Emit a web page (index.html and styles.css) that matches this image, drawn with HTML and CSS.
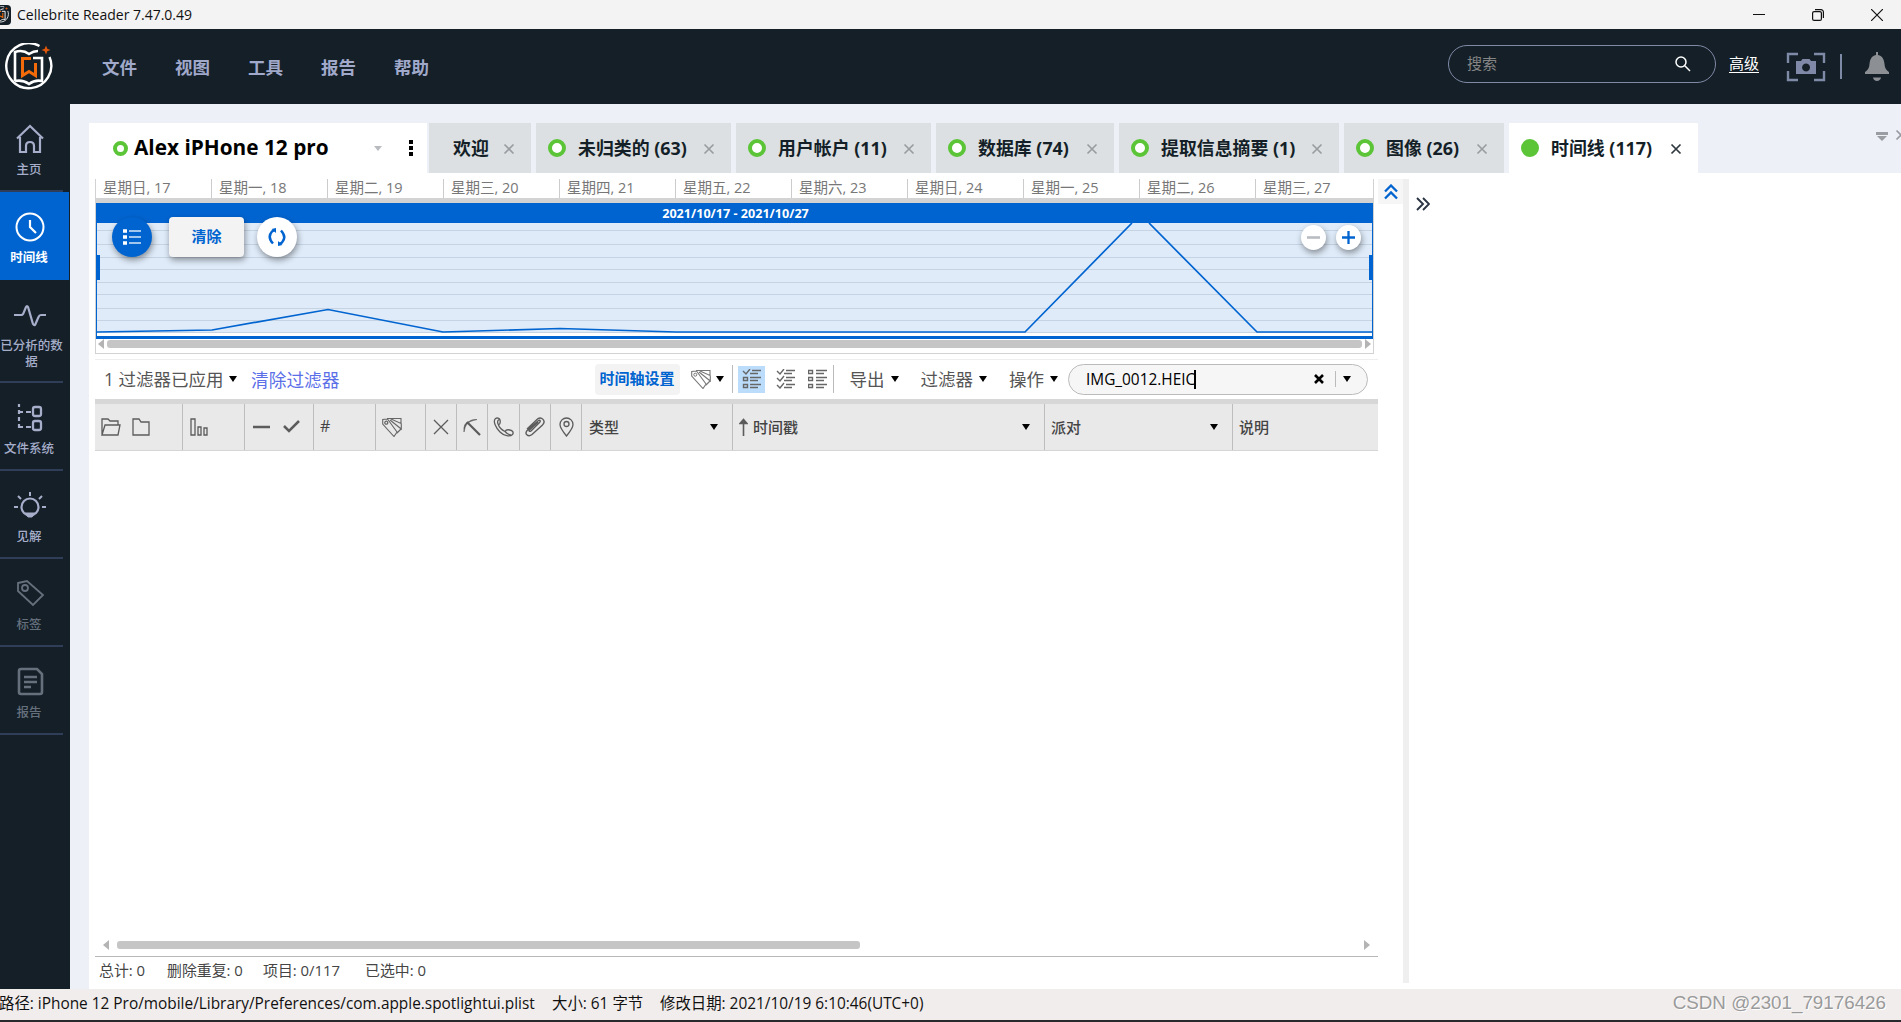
FILE: index.html
```html
<!DOCTYPE html>
<html lang="zh-CN">
<head>
    <meta charset="UTF-8">
    <meta name="viewport" content="width=device-width, initial-scale=1.0">
    <title>Cellebrite Reader 7.47.0.49</title>
    <link rel="stylesheet" href="styles.css">
</head>
<body>
    <svg width="0" height="0" class="defs">
        <symbol id="close" viewBox="0 0 12 12"><path d="M1.5 1.5l9 9M10.500 1.500l-9 9" fill="none" stroke="currentColor" stroke-width="1.7"/></symbol>
        <symbol id="tags" viewBox="0 0 20 20"><path d="M.7 7V2.500L5.500 2l9.500 13-3 4.500zM5 1.500h14v5L9 2M19.300 6.500v5.500L8 3M19 12l-4 4" fill="none" stroke="currentColor" stroke-width="1.100"/><circle cx="4.300" cy="5.700" r="1.500" fill="none" stroke="currentColor"/></symbol>
        <symbol id="logo" viewBox="0 0 48 48">
            <path d="M34.500 3A22.500 22.500 0 1 0 44.500 14" fill="none" stroke="#fff" stroke-width="2.400"/>
            <path d="M10 38V9c6-2 10-1 14 2 3-2 5-3 9-3M10 38c6-1 10 0 14 3 4-3 8-4 13-3V15h-9" fill="none" stroke="#fff" stroke-width="2.600"/>
            <path d="M26 15.500h-8.500v17l6.500-4 6.500 4V20" fill="none" stroke="#f26a0a" stroke-width="3"/>
            <path d="M41 2.500l1.300 3.200 3.200 1.300-3.200 1.300L41 11.500l-1.300-3.200L36.500 7l3.200-1.300z" fill="#e0560a"/>
        </symbol>
    </svg>

    <div class="titlebar">
        <svg class="app-icon" viewBox="0 0 20 20"><rect width="20" height="20" rx="4" fill="#141f28"/><use href="#logo" x="1" y="1" width="17" height="17"/></svg>
        <span class="app-name">Cellebrite Reader 7.47.0.49</span>
        <div class="window-buttons">
            <svg width="12" height="12" viewBox="0 0 12 12"><path d="M0 5.500h12" stroke="#111"/></svg>
            <svg width="12" height="12" viewBox="0 0 12 12" fill="none" stroke="#111" stroke-width="1.200"><rect x=".6" y="2.600" width="8.800" height="8.800" rx="1.500"/><path d="M3 .6h6a2.400 2.400 0 0 1 2.400 2.400v6"/></svg>
            <svg width="12" height="12" viewBox="0 0 12 12"><path d="M0 0l12 12M12 0L0 12" stroke="#111" stroke-width="1.200"/></svg>
        </div>
    </div>

    <div class="header">
        <svg class="logo"><use href="#logo"/></svg>
        <div class="menu">
            <span>文件</span><span>视图</span><span>工具</span><span>报告</span><span>帮助</span>
        </div>
        <div class="search">
            <span>搜索</span>
            <svg width="16" height="16" viewBox="0 0 16 16" fill="none" stroke="#fff" stroke-width="1.500"><circle cx="6" cy="6" r="5"/><path d="M9.800 9.800L15 15"/></svg>
        </div>
        <a class="advanced">高级</a>
        <svg class="camera" width="40" height="30" viewBox="0 0 40 30">
            <path d="M2 11V2h10M28 2h10v9M38 19v9H28M12 28H2v-9" fill="none" stroke="#7f8aa6" stroke-width="2.400"/>
            <path fill-rule="evenodd" d="M10 9h5l1.500-2h7L25 9h5v13H10zM20 11.500a4 4 0 1 0 .1 0z" fill="#8089a8"/>
        </svg>
        <i class="header-line"></i>
        <svg class="bell" width="24" height="30" viewBox="0 0 24 30" fill="#8c8f94"><path d="M11 0h2v3c5 1 6 5 6.500 9 .3 4 1.500 6 4.500 8v2H0v-2c3-2 4.200-4 4.500-8C5 8 6 4 11 3zM8 25.500h8c-.5 4.500-7.500 4.500-8 0z"/></svg>
    </div>

    <div class="main">
        <div class="sidebar">
            <div class="nav first">
                <svg width="30" height="30" viewBox="0 0 30 30"><path d="M2 14.500L15 2l13 12.500M5 13v15h6v-6q0-4 4-4t4 4v6h6V13" stroke-width="2.200"/></svg>
                <span>主页</span>
            </div>
            <div class="nav active">
                <svg width="30" height="30" viewBox="0 0 30 30"><circle cx="15" cy="15" r="13.500" stroke-width="2"/><path d="M15 8v7l6 6" stroke-width="2.200"/></svg>
                <span>时间线</span>
            </div>
            <div class="nav tall">
                <svg width="32" height="30" viewBox="0 0 32 30"><path d="M0 15h7q2 0 2.500-2l2.500-6q1-2 2 0l5 17q1.500 2.500 2.500 0l3-7q.8-2 2.500-2H32" stroke-width="2.200"/></svg>
                <span>已分析的数据</span>
            </div>
            <div class="nav">
                <svg width="30" height="30" viewBox="0 0 30 30"><path d="M4 1v3m0 3v4m0 3v4m0 3v3h4m3 0h5M5 9h3m3 0h5" stroke-width="2.200"/><rect x="18" y="4" width="8" height="9" rx="2" stroke-width="2.300"/><rect x="18" y="18" width="8" height="9" rx="2" stroke-width="2.300"/></svg>
                <span>文件系统</span>
            </div>
            <div class="nav">
                <svg width="32" height="30" viewBox="0 0 32 30"><path d="M16 1v4M4 5l3 3M28 5l-3 3M0 16h4m24 0h4" stroke-width="2"/><circle cx="16" cy="16" r="8.500" stroke-width="2.200"/><path d="M11 22h10l-3 4h-4z" fill="currentColor"/></svg>
                <span>见解</span>
            </div>
            <div class="nav disabled">
                <svg width="30" height="30" viewBox="0 0 30 30"><path d="M3 4l9-2 16 14-10 10L3 12z" stroke-width="1.800"/><circle cx="10" cy="9" r="3" stroke-width="1.800"/></svg>
                <span>标签</span>
            </div>
            <div class="nav disabled">
                <svg width="30" height="30" viewBox="0 0 30 30"><path d="M6 2h16l5 5v18q0 2-2 2H6q-2 0-2-2V4q0-2 2-2z" stroke-width="2.600"/><path d="M9 10h13M9 15h13M9 20h7" stroke-width="2.300"/></svg>
                <span>报告</span>
            </div>
        </div>

        <div class="content">
            <div class="tabs">
                <div class="tab device">
                    <i class="ring small"></i><span>Alex iPHone 12 pro</span>
                    <i class="caret grey"></i>
                    <svg width="4" height="16" viewBox="0 0 4 16"><path d="M0 0h4v4H0zM0 6h4v4H0zM0 12h4v4H0z"/></svg>
                </div>
                <div class="tab welcome"><span>欢迎</span><svg class="x"><use href="#close"/></svg></div>
                <div class="tab uncat"><i class="ring"></i><span>未归类的 (63)</span><svg class="x"><use href="#close"/></svg></div>
                <div class="tab users"><i class="ring"></i><span>用户帐户 (11)</span><svg class="x"><use href="#close"/></svg></div>
                <div class="tab dbs"><i class="ring"></i><span>数据库 (74)</span><svg class="x"><use href="#close"/></svg></div>
                <div class="tab summary"><i class="ring"></i><span>提取信息摘要 (1)</span><svg class="x"><use href="#close"/></svg></div>
                <div class="tab images"><i class="ring"></i><span>图像 (26)</span><svg class="x"><use href="#close"/></svg></div>
                <div class="tab timeline"><i class="ring full"></i><span>时间线 (117)</span><svg class="x"><use href="#close"/></svg></div>
                <div class="tab-tools">
                    <svg width="12" height="10" viewBox="0 0 12 10"><path d="M0 0h12v3H0zM1 4h10L6 9z" fill="#9a9da2"/></svg>
                    <svg class="x"><use href="#close"/></svg>
                </div>
            </div>

            <div class="workspace">
                <div class="left">
                    <div class="chart-row">
                        <div class="chart-panel">
                            <div class="days">
                                <span>星期日, 17</span><span>星期一, 18</span><span>星期二, 19</span><span>星期三, 20</span><span>星期四, 21</span><span>星期五, 22</span><span>星期六, 23</span><span>星期日, 24</span><span>星期一, 25</span><span>星期二, 26</span><span>星期三, 27</span>
                            </div>
                            <div class="range">2021/10/17 - 2021/10/27</div>
                            <div class="chart">
                                <svg width="1275" height="110" viewBox="0 0 1275 110">
                                    <path d="M0 7.500h1275M0 21.500h1275M0 34.500h1275M0 46.500h1275M0 59.500h1275M0 71.500h1275M0 85.500h1275M0 97.500h1275M0 109.500h1275" stroke="#c5d3e2"/>
                                    <path d="M0 109L115 107 231 86.500 346 109 463 105.500 579 109H928L1035 0M1052 0L1160 109H1275" fill="none" stroke="#0064d0" stroke-width="1.700"/>
                                    <path d="M0 32h3v25H0zM1272 32h3v25h-3z" fill="#0064d0"/>
                                </svg>
                                <div class="chart-tools">
                                    <div class="round blue"><svg width="18" height="16" viewBox="0 0 18 16"><path d="M0 2h4M0 8h4M0 14h4" stroke="#fff" stroke-width="3.500"/><path d="M6 2h12M6 8h12M6 14h12" stroke="#d5e6f8" stroke-width="1.600"/></svg></div>
                                    <div class="clear">清除</div>
                                    <div class="round"><svg width="18" height="18" viewBox="0 0 18 18" fill="none" stroke="#0064d0" stroke-width="2.500"><path d="M5 15.500Q-1 9 4 3.500L7 2M13 2.500q6 6.500 1 12L11 16"/><path d="M3.500 1L8 0 8 5zM14.500 17L10 18V13z" fill="#0064d0" stroke="none"/></svg></div>
                                </div>
                                <div class="zoom-tools">
                                    <div class="round"><svg width="13" height="13" viewBox="0 0 13 13"><path d="M0 6.500h13" stroke="#b9bdc2" stroke-width="2.600"/></svg></div>
                                    <div class="round"><svg width="13" height="13" viewBox="0 0 13 13"><path d="M0 6.500h13M6.500 0v13" stroke="#0064d0" stroke-width="2.300"/></svg></div>
                                </div>
                            </div>
                            <div class="chart-scroll"><i class="arrow-left"></i><div class="thumb"></div><i class="arrow-right"></i></div>
                        </div>
                        <div class="collapse"><svg width="14" height="16" viewBox="0 0 14 16"><path d="M1 7.500l6-6 6 6M1 14.500l6-6 6 6" fill="none" stroke="#0064d0" stroke-width="2.300"/></svg></div>
                    </div>

                    <div class="toolbar">
                        <span class="applied">1 过滤器已应用</span><i class="caret"></i>
                        <span class="clear-filters">清除过滤器</span>
                        <span class="settings">时间轴设置</span>
                        <svg class="tag-icon" width="20" height="20"><use href="#tags"/></svg><i class="caret"></i>
                        <i class="line"></i>
                        <div class="view-icon on"><svg width="19" height="20" viewBox="0 0 19 20"><path d="M1 2l3 3 4-5M10 1.500h9M8 4.500h8M8 8.500h11M8 11.500h8M8 15.500h11M8 18.500h8M1.500 8.500h4v3h-4zM1.500 15.500h4v3h-4z"/></svg></div>
                        <div class="view-icon"><svg width="19" height="20" viewBox="0 0 19 20"><path d="M1 2l3 3 4-5M1 9l3 3 4-5M1 16l3 3 4-5M10 1.500h9M8 4.500h8M10 8.500h9M8 11.500h8M10 15.500h9M8 18.500h8"/></svg></div>
                        <div class="view-icon"><svg width="19" height="20" viewBox="0 0 19 20"><path d="M.5 1.500h4v3h-4zM8 1.500h11M8 4.500h8M8 8.500h11M8 11.500h8M8 15.500h11M8 18.500h8M.5 8.500h4v3h-4zM.5 15.500h4v3h-4z"/></svg></div>
                        <i class="line after"></i>
                        <span class="drop">导出</span><i class="caret"></i>
                        <span class="drop">过滤器</span><i class="caret"></i>
                        <span class="drop">操作</span><i class="caret"></i>
                        <div class="filter-box">
                            <span>IMG_0012.HEIC</span><i class="cursor"></i>
                            <svg class="clear-x" width="10" height="10" viewBox="0 0 10 10"><path d="M1 1l8 8M9 1L1 9" stroke="#000" stroke-width="2.600"/></svg>
                            <i class="sep"></i><i class="caret"></i>
                        </div>
                    </div>

                    <div class="grid-head">
                        <div class="c-folder">
                            <svg width="20" height="18" viewBox="0 0 20 18"><path d="M1 17V1h6l2 2h8v4M1 17L4 7h15l-2 10z"/></svg>
                            <svg width="18" height="18" viewBox="0 0 18 18"><path d="M1 17V1h6l2 3h8v13z"/></svg>
                        </div>
                        <div class="c-bars"><svg width="18" height="18" viewBox="0 0 18 18"><path d="M1 1h4v16H1zM8 9h3v8H8zM14 10h3v7h-3z"/></svg></div>
                        <div class="c-check">
                            <svg width="17" height="18" viewBox="0 0 17 18"><path d="M0 9h17" stroke-width="2.500"/></svg>
                            <svg width="17" height="18" viewBox="0 0 17 18"><path d="M1 8l5 5L16 3" stroke-width="2.500"/></svg>
                        </div>
                        <div class="c-num">#</div>
                        <div class="c-tags"><svg width="20" height="20"><use href="#tags"/></svg></div>
                        <div class="c-icon"><svg width="16" height="16" viewBox="0 0 16 16"><path d="M1 1l14 14M15 1L1 15"/></svg></div>
                        <div class="c-icon"><svg width="18" height="18" viewBox="0 0 18 18"><path d="M4 4l13 13" stroke-width="2.200"/><path d="M1 14Q0 5 6 3.500 9 1 14 1.500 6 3 4 6q-2 2-3 8z" fill="#505050" stroke-width=".6"/></svg></div>
                        <div class="c-icon wide"><svg width="21" height="20" viewBox="0 0 21 20"><path d="M2.500 1.500C4 .5 6.500 1 7 3s.5 4-1.500 5c1 3 3.500 5 6.500 6.500 1-2 3-2 5-1.500 2.500.5 4 2.500 2.500 4.500C17 20 11 19 7 15S-.5 4 2.500 1.500zM6 2.500Q3.500 4 5.500 8M12 14.500q3 3.500 6 3.500"/></svg></div>
                        <div class="c-icon"><svg width="20" height="20" viewBox="0 0 20 20"><path d="M6 14l8.500-8.500c1.500-1.500.5-3-1-2L3 12.500c-5 4.500.5 8 4 5L17.500 8c4-4-1-9-5-6L2 12M6 14q-1.500 1-2-.5L13 5" stroke-width="1.400"/></svg></div>
                        <div class="c-icon"><svg width="15" height="20" viewBox="0 0 15 20"><path d="M7.500 19Q1 11 1 7.500a6.500 6.500 0 0 1 13 0Q14 11 7.500 19z"/><circle cx="7.500" cy="7" r="2.500"/></svg></div>
                        <div class="c-type"><span>类型</span><i class="caret"></i></div>
                        <div class="c-time"><svg width="9" height="18" viewBox="0 0 9 18"><path d="M4.500 18V2M1 5.500l3.500-4 3.500 4z" fill="#505050" stroke-width="1.600"/></svg><span>时间戳</span><i class="caret"></i></div>
                        <div class="c-party"><span>派对</span><i class="caret"></i></div>
                        <div class="c-desc"><span>说明</span></div>
                    </div>

                    <div class="grid-body"></div>
                    <div class="grid-scroll"><i class="arrow-left"></i><div class="thumb"></div><i class="arrow-right"></i></div>
                    <div class="totals">
                        <span class="t1">总计: 0</span><span class="t2">删除重复: 0</span><span class="t3">项目: 0/117</span><span>已选中: 0</span>
                    </div>
                </div>
                <div class="splitter"></div>
                <div class="right">
                    <svg width="14" height="14" viewBox="0 0 14 14"><path d="M1 1l6 6-6 6M7 1l6 6-6 6" fill="none" stroke="#2a3442" stroke-width="1.900"/></svg>
                </div>
            </div>
        </div>
    </div>

    <div class="statusbar">
        <span class="path">路径: iPhone 12 Pro/mobile/Library/Preferences/com.apple.spotlightui.plist</span>
        <span class="size">大小: 61 字节</span>
        <span class="date">修改日期: 2021/10/19 6:10:46(UTC+0)</span>
        <span class="watermark">CSDN @2301_79176426</span>
    </div>
</body>
</html>
```
FILE: styles.css
```css
* {
    box-sizing: border-box;
}
body {
    margin: 0;
    width: 1901px;
    height: 1022px;
    display: flex;
    flex-direction: column;
    overflow: hidden;
    background: #fff;
    font-family: "Open Sans", "Noto Sans CJK SC", sans-serif;
    font-size: 15px;
    color: #141f28;
    white-space: nowrap;
}
svg {
    display: block;
    flex: none;
}
.defs {
    position: absolute;
}

/* title bar */
.titlebar {
    height: 29px;
    flex: none;
    display: flex;
    align-items: center;
    background: #f3f3f3;
    color: #111;
}
.app-icon {
    width: 20px;
    height: 20px;
    margin-left: -9px;
}
.app-name {
    margin-left: 6px;
    font-size: 14px;
}
.window-buttons {
    margin-left: auto;
    margin-right: 18px;
    display: flex;
    gap: 47px;
}

/* header */
.header {
    height: 75px;
    flex: none;
    display: flex;
    align-items: center;
    background: #141f28;
}
.logo {
    width: 48px;
    height: 48px;
    margin-left: 5px;
}
.menu {
    display: flex;
    gap: 38px;
    margin-left: 49px;
    font-size: 17.5px;
    font-weight: bold;
    color: #a0a9ca;
}
.search {
    width: 268px;
    height: 38px;
    margin: 0 0 5px auto;
    padding: 0 24px 0 18px;
    border: 1px solid #7f8aa6;
    border-radius: 19px;
    display: flex;
    align-items: center;
    justify-content: space-between;
    color: #858585;
}
.search span {
    margin-bottom: 4px;
}
.advanced {
    margin: 0 27px 9px 13px;
    color: #fff;
    text-decoration: underline;
    text-underline-offset: 3px;
}
.header-line {
    width: 2px;
    height: 25px;
    margin: 0 23px 0 14px;
    background: #7f8aa6;
}
.bell {
    margin-right: 12px;
}

.main {
    flex: 1;
    min-height: 0;
    display: flex;
}

/* sidebar */
.sidebar {
    width: 70px;
    flex: none;
    background: #141f28;
}
.nav {
    width: 63px;
    height: 88px;
    padding-top: 20px;
    border-bottom: 2px solid #2f3d58;
    display: flex;
    flex-direction: column;
    align-items: center;
    color: #a6aeca;
    font-size: 12.5px;
    font-weight: 500;
    line-height: 16px;
    text-align: center;
}
.nav svg {
    margin-right: 4px;
    fill: none;
    stroke: currentColor;
}
.nav span {
    width: 66px;
    margin: 8px 0 0 -5px;
    white-space: normal;
}
.nav.active {
    width: 69px;
    padding-right: 6px;
    border: 0;
    background: #0064d0;
    color: #fff;
    font-weight: bold;
}
.nav.tall {
    height: 103px;
}
.nav.tall span {
    margin-left: 0;
}
.nav.disabled {
    color: #66707d;
}

/* tabs */
.content {
    flex: 1;
    min-width: 0;
    padding: 19px 0 0 19px;
    display: flex;
    flex-direction: column;
    background: #edf0f6;
}
.tabs {
    height: 50px;
    flex: none;
    display: flex;
    gap: 5px;
}
.tab {
    flex: none;
    padding: 0 16px 0 12px;
    display: flex;
    align-items: center;
    background: #dce0e3;
    font-size: 17.9px;
    font-weight: bold;
}
.tab span {
    margin-bottom: 2px;
}
.tab .x {
    margin-left: auto;
    margin-top: 2px;
    color: #999da1;
}
.x {
    width: 12px;
    height: 12px;
}
.ring {
    width: 18px;
    height: 18px;
    margin-right: 12px;
    border: 4px solid #5bc537;
    border-radius: 50%;
    background: #fff;
    flex: none;
}
.ring.small {
    width: 15px;
    height: 15px;
    margin-right: 6px;
}
.ring.full {
    background: #5bc537;
}
.device {
    width: 338px;
    padding: 0 14px 0 24px;
    margin-right: -3px;
    background: #fff;
    color: #000;
    font-size: 20.8px;
}
.device .caret {
    margin-left: auto;
    margin-right: 27px;
}
.welcome {
    width: 102px;
    padding-left: 24px;
}
.uncat, .users {
    width: 195px;
}
.dbs {
    width: 178px;
}
.summary {
    width: 220px;
}
.images {
    width: 160px;
}
.timeline {
    width: 189px;
    background: #fff;
}
.timeline .x {
    color: #30383f;
}
.tab-tools {
    margin-left: auto;
    margin-right: -6px;
    padding-top: 6px;
    display: flex;
    gap: 7px;
    color: #999da1;
}
.tab-tools svg:first-child {
    margin-top: 3px;
}
.caret {
    flex: none;
    width: 0;
    border: 4.5px solid transparent;
    border-top: 6px solid #000;
    border-bottom: 0;
}
.caret.grey {
    border-top-color: #b8bbc0;
    border-width: 5px 4px 0;
}

/* work area */
.workspace {
    flex: 1;
    min-height: 0;
    padding: 6px 0 6px 6px;
    display: flex;
    background: #fff;
}
.left {
    width: 1308px;
    flex: none;
    display: flex;
    flex-direction: column;
}
.chart-row {
    display: flex;
    justify-content: space-between;
}
.chart-panel {
    width: 1279px;
    height: 175px;
    border: 1px solid #d2d2d2;
    border-top: 0;
}
.days {
    height: 24px;
    display: flex;
    border-bottom: 5px solid #d3d3d3;
    color: #777;
    font-size: 14.5px;
    line-height: 18px;
}
.days span {
    width: 116px;
    flex: none;
    padding-left: 7px;
    border-left: 1px solid #ccc;
}
.days span:first-child {
    width: 115px;
    border-left: 0;
}
.range {
    height: 20px;
    padding-left: 2px;
    background: #0064d0;
    color: #fff;
    font-size: 12.6px;
    font-weight: bold;
    line-height: 21px;
    text-align: center;
}
.chart {
    position: relative;
    height: 113px;
    border-left: 1px solid #0064d0;
    border-right: 1px solid #0064d0;
    background: linear-gradient(#dfebf9 110px, #fff 110px);
}
.chart-tools {
    position: absolute;
    left: 15px;
    top: -6px;
    display: flex;
}
.round {
    width: 40px;
    height: 40px;
    border-radius: 50%;
    background: #fff;
    box-shadow: 1px 3px 6px rgba(0,0,0,0.4);
    display: flex;
    align-items: center;
    justify-content: center;
}
.round.blue {
    background: #0064d0;
}
.clear {
    width: 75px;
    height: 40px;
    margin: 0 13px 0 17px;
    border-radius: 4px;
    background: #f3f3f3;
    box-shadow: 1px 3px 6px rgba(0,0,0,0.4);
    color: #0064d0;
    font-weight: bold;
    line-height: 38px;
    text-align: center;
}
.zoom-tools {
    position: absolute;
    right: 11px;
    top: 2px;
    display: flex;
    gap: 10px;
}
.zoom-tools .round {
    width: 25px;
    height: 25px;
}
.chart-scroll {
    height: 12px;
    border-top: 3px solid #0064d0;
    display: flex;
    align-items: center;
    padding: 0 2px;
}
.arrow-left, .arrow-right {
    flex: none;
    border: 5px solid transparent;
    border-left: 0;
    border-right: 6px solid #b4b4b4;
}
.arrow-right {
    border-left: 6px solid #b4b4b4;
    border-right: 0;
}
.thumb {
    height: 8px;
    border-radius: 3px;
    background: #c5c5c5;
}
.chart-scroll .thumb {
    flex: 1;
    margin: 0 3px;
}
.collapse {
    width: 25px;
    height: 25px;
    background: #f6f6f6;
    display: flex;
    align-items: center;
    justify-content: center;
}

.toolbar {
    width: 1283px;
    height: 40px;
    margin-top: 5px;
    padding-bottom: 1px;
    border-top: 1px solid #eee;
    display: flex;
    align-items: center;
    color: #555;
    font-size: 17.5px;
}
.toolbar > span {
    margin-bottom: 1px;
}
.toolbar > .applied {
    width: 125px;
    margin-left: 9px;
}
.applied + .caret {
    margin-right: 14px;
}
.clear-filters {
    width: 88px;
    color: #5b6fe8;
    font-size: 17.7px;
}
.toolbar > .settings {
    width: 85px;
    height: 31px;
    margin-left: auto;
    margin-bottom: 0;
    border-radius: 4px;
    background: #f3f3f3;
    color: #0064d0;
    font-size: 15px;
    font-weight: bold;
    line-height: 29px;
    text-align: center;
}
.tag-icon {
    margin: 0 5px 0 11px;
    color: #777;
}
.line {
    width: 1px;
    height: 28px;
    margin: 0 5px 0 8px;
    background: #bbb;
}
.view-icon {
    width: 27px;
    height: 27px;
    margin-right: 5px;
    display: flex;
    align-items: center;
    justify-content: center;
}
.view-icon.on {
    margin-right: 7px;
    background: #bcdcfc;
}
.view-icon path {
    fill: none;
    stroke: #666;
    stroke-width: 1.4;
}
.line.after {
    margin: 0 0 0 -3px;
}
.toolbar > .drop {
    margin-left: 22px;
    margin-right: 6px;
}
.toolbar > .line.after + .drop {
    margin-left: 16px;
}
.filter-box {
    width: 300px;
    height: 31px;
    margin: 0 10px 0 10px;
    padding: 0 16px 0 17px;
    border: 1px solid #bbb;
    border-radius: 16px;
    background: #f6f6f6;
    display: flex;
    align-items: center;
    color: #000;
    font-size: 15.4px;
}
.cursor {
    width: 2px;
    height: 19px;
    margin-left: -1px;
    background: #000;
}
.clear-x {
    margin-left: auto;
}
.sep {
    width: 1px;
    height: 16px;
    margin: 0 7px 0 11px;
    background: #bbb;
}

/* results grid */
.grid-head {
    width: 1283px;
    height: 52px;
    flex: none;
    border-top: 5px solid #d7d7d7;
    border-bottom: 1px solid #d5d5d5;
    display: flex;
    background: #e9e9e9;
    color: #444;
    font-weight: 500;
}
.grid-head > div {
    flex: none;
    padding: 0 6px;
    border-right: 1px solid #bdbdbd;
    display: flex;
    align-items: center;
}
.grid-head > .c-desc {
    flex: 1;
    border: 0;
}
.grid-head span {
    margin-bottom: 2px;
}
.grid-head svg {
    color: #666;
    fill: none;
    stroke: #5c5c5c;
    stroke-width: 1.3;
}
.grid-head .c-folder {
    width: 88px;
    gap: 11px;
}
.grid-head .c-bars {
    width: 62px;
    padding-left: 7px;
}
.grid-head .c-check {
    width: 69px;
    padding-left: 8px;
    gap: 13px;
}
.grid-head .c-num {
    width: 62px;
    padding-bottom: 3px;
    font-size: 16px;
}
.grid-head .c-tags {
    width: 50px;
}
.grid-head .c-icon {
    width: 31px;
    padding: 0;
    justify-content: center;
}
.grid-head .c-icon.wide {
    width: 32px;
}
.grid-head .c-type {
    width: 151px;
    padding: 0 14px 0 7px;
}
.grid-head .c-time {
    width: 312px;
    padding: 0 14px 0 6px;
    gap: 5px;
}
.grid-head .c-party {
    width: 188px;
    padding-right: 14px;
}
.grid-head .caret {
    margin-left: auto;
}
.grid-body {
    flex: 1;
}
.grid-scroll {
    width: 1283px;
    height: 23px;
    padding: 0 8px;
    border-bottom: 1px solid #b8b8b8;
    display: flex;
    align-items: center;
}
.grid-scroll .thumb {
    width: 743px;
    margin-left: 8px;
}
.grid-scroll .arrow-right {
    margin-left: auto;
}
.totals {
    height: 26px;
    display: flex;
    padding-left: 4px;
    color: #444;
    font-size: 14.9px;
    line-height: 26px;
}
.t1 {
    width: 68px;
}
.t2 {
    width: 96px;
}
.t3 {
    width: 102px;
}
.splitter {
    width: 6px;
    background: #efefef;
}
.right {
    padding: 18px 7px;
}

/* status bar */
.statusbar {
    position: relative;
    height: 33px;
    flex: none;
    border-bottom: 2px solid #29292d;
    display: flex;
    background: #f1edec;
    color: #111;
    font-size: 15.4px;
    line-height: 30px;
}
.path {
    width: 553px;
    margin-left: -1px;
}
.size {
    width: 108px;
}
.watermark {
    position: absolute;
    right: 15px;
    top: -1px;
    font-family: "Liberation Sans", sans-serif;
    font-size: 18.8px;
    color: #9a9a9a;
    text-shadow: 1px 1px 0 #fff;
}
```
